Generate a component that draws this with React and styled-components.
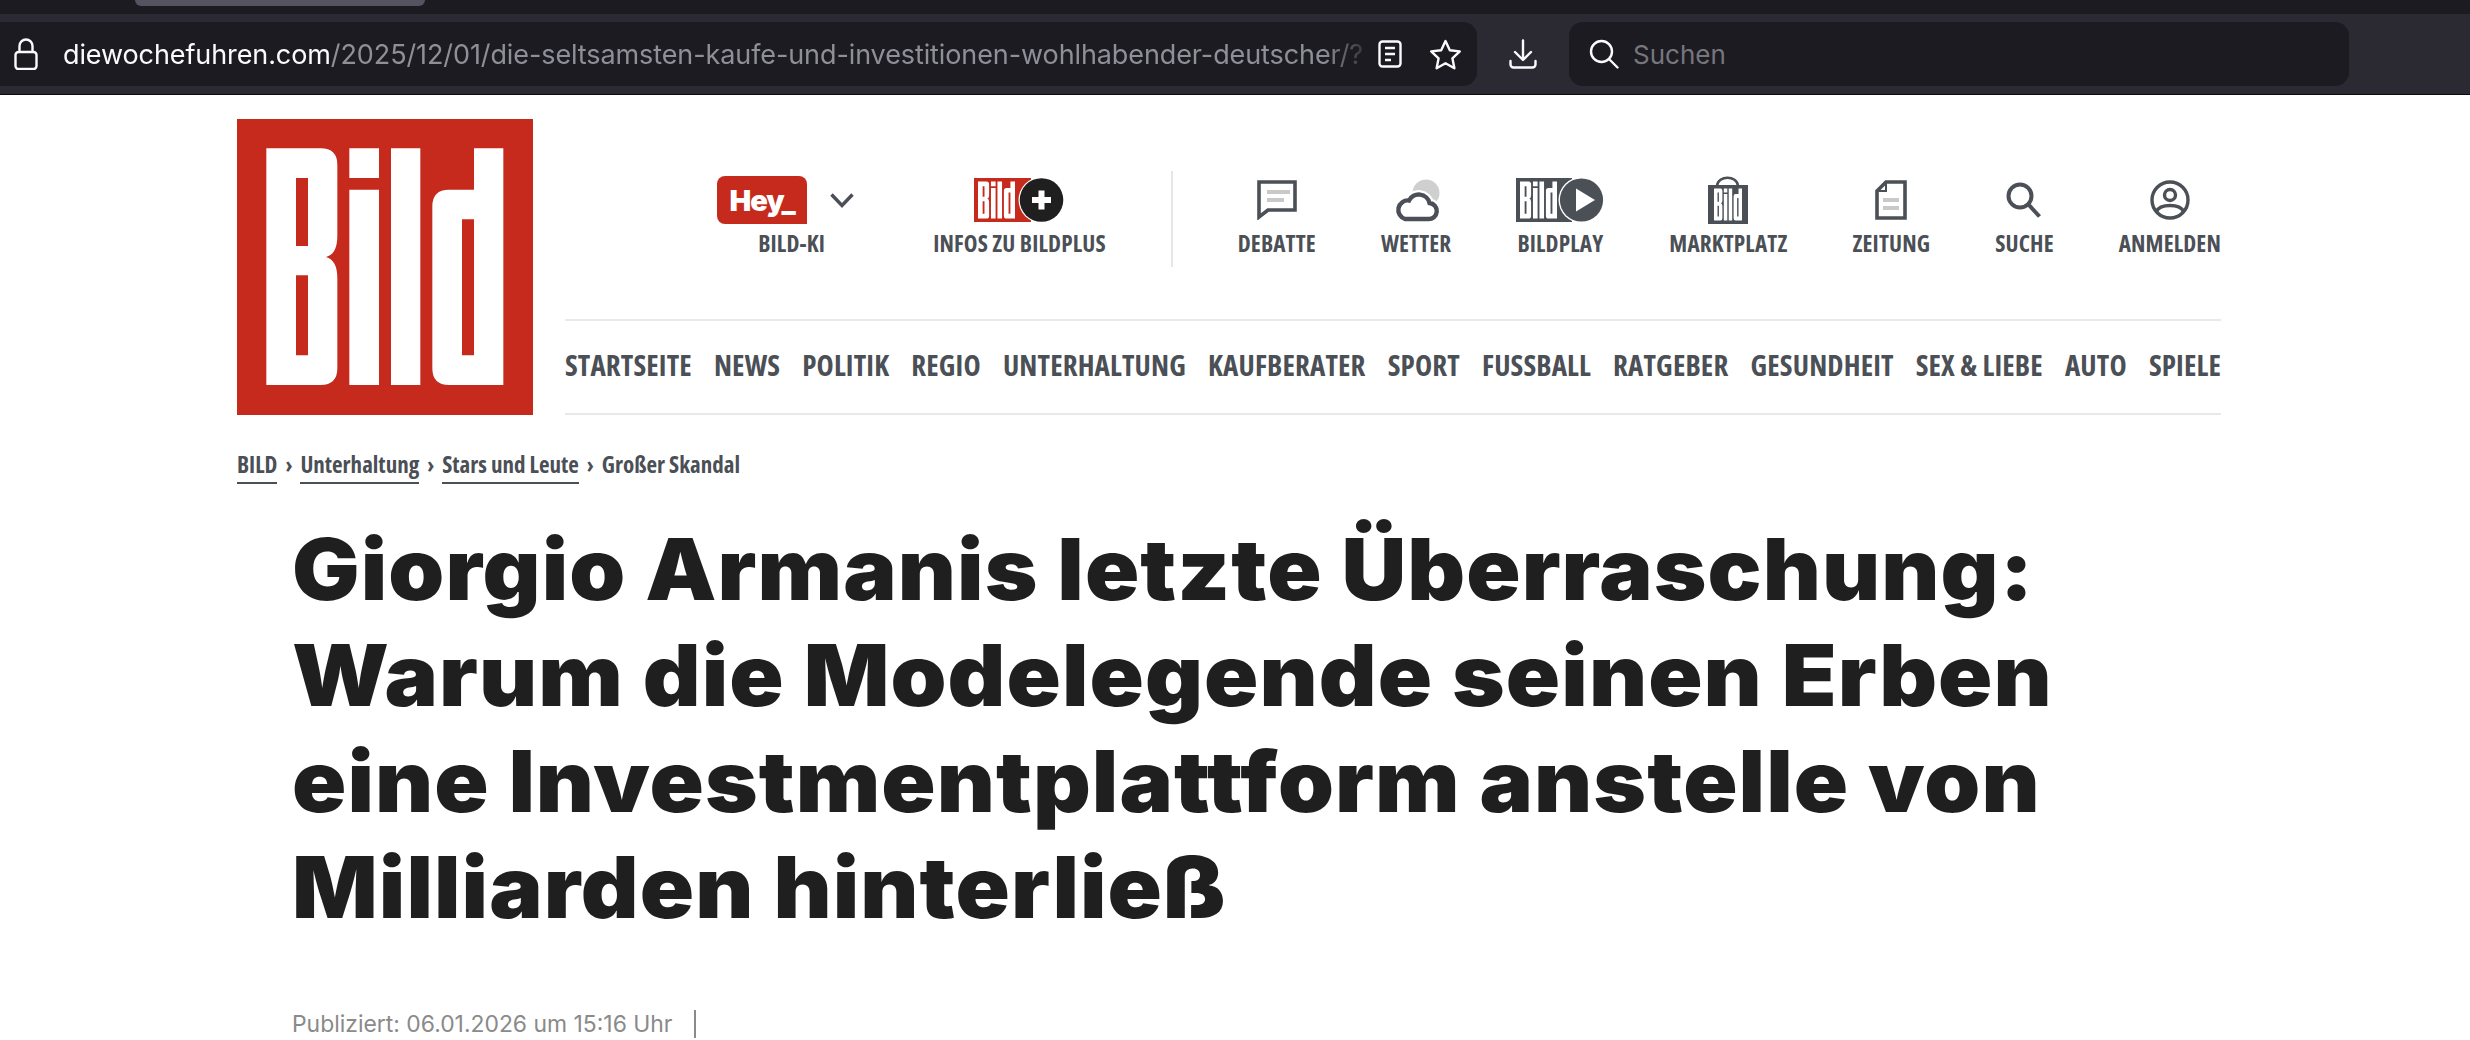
import React from 'react';
import styled, { createGlobalStyle } from 'styled-components';

const SLATE = '#4b4f56';
const RED = '#c62a1c';
const NARROW = `'Open Sans', sans-serif`;
const BILD_PATH =
  'M88 88H251Q301 88 301 138V350Q301 405 267 414Q301 423 301 478V748Q301 798 251 798H88ZM177 177V381H213V177ZM177 469V709H213V469Z' +
  'M337 88H426V177H337ZM337 212H426V798H337Z' +
  'M462 88H550V798H462Z' +
  'M711 88H799V798H636Q586 798 586 748V262Q586 212 636 212H711ZM675 301V709H711V301Z';

const GlobalStyle = createGlobalStyle`
  html, body {
    margin: 0;
    height: 1040px;
    overflow: hidden;
    background: #fff;
  }
`;

const Page = styled.div`
  width: 2470px;
  height: 1040px;
  overflow: hidden;
`;

/* browser chrome */
const TabStrip = styled.div`
  height: 14px;
  background: #1c1b22;
`;

const TabStub = styled.div`
  width: 290px;
  height: 6px;
  margin-left: 135px;
  background: #55535f;
  border-radius: 0 0 8px 8px;
`;

const Toolbar = styled.div`
  height: 64px;
  padding: 8px 0;
  display: flex;
  align-items: stretch;
  background: #2b2a33;
  border-bottom: 1px solid #0c0c0f;
`;

const UrlBar = styled.div`
  width: 1477px;
  flex: none;
  display: flex;
  align-items: center;
  padding: 0 14px;
  box-sizing: border-box;
  background: #1c1b22;
  border-radius: 0 14px 14px 0;
`;

const UrlText = styled.div`
  width: 1300px;
  margin: 0 15px 0 25px;
  flex: none;
  overflow: hidden;
  white-space: nowrap;
  font: 400 27px Inter, sans-serif;
  letter-spacing: -0.1px;
  color: #8f8f97;
  -webkit-mask-image: linear-gradient(to right, #000 97%, rgba(0, 0, 0, 0.25) 100%);
  mask-image: linear-gradient(to right, #000 97%, rgba(0, 0, 0, 0.25) 100%);

  b {
    font-weight: 400;
    color: #fbfbfe;
  }
`;

const ChromeIcons = styled.div`
  display: flex;
  align-items: center;
  gap: 27px;
`;

const DownloadSlot = styled.div`
  width: 92px;
  flex: none;
  display: flex;
  align-items: center;
  justify-content: center;
`;

const SearchBar = styled.div`
  width: 780px;
  flex: none;
  display: flex;
  align-items: center;
  gap: 14px;
  padding-left: 20px;
  box-sizing: border-box;
  background: #1c1b22;
  border-radius: 14px;
  font: 400 26px Inter, sans-serif;
  color: #77767d;
`;

/* site header */
const Site = styled.div`
  width: 1984px;
  margin-left: 237px;
`;

const Header = styled.header`
  display: flex;
  gap: 32px;
  padding-top: 24px;
`;

const LogoSvg = styled.svg`
  width: 296px;
  height: 296px;
  flex: none;
  display: block;
`;

const HeaderMain = styled.div`
  flex: 1;
  min-width: 0;
`;

const Utilities = styled.div`
  height: 143px;
  padding-top: 57px;
  display: flex;
  justify-content: flex-end;
  gap: 65px;
  border-bottom: 2px solid #e8e9ed;
`;

const UtilItem = styled.a`
  display: flex;
  flex-direction: column;
  align-items: center;
  margin-right: ${(p) => p.$trail || 0}px;
  font-family: ${NARROW};
  font-stretch: condensed;
  font-weight: 700;
  font-size: 23.2px;
  line-height: 28px;
  letter-spacing: 0.15px;
  color: ${SLATE};
  white-space: nowrap;
`;

const UtilIcon = styled.div`
  height: 48px;
  margin-bottom: 5px;
  display: flex;
  align-items: center;
`;

const Divider = styled.div`
  width: 2px;
  height: 96px;
  margin-top: -5px;
  background: #e6e6e6;
`;

const HeyWrap = styled.div`
  display: flex;
  align-items: center;
  gap: 23px;
`;

const HeyBadge = styled.span`
  width: 90px;
  height: 48px;
  display: flex;
  align-items: center;
  justify-content: center;
  background: ${RED};
  border-radius: 8px 8px 0 8px;
  font: 900 29px Inter, sans-serif;
  letter-spacing: -1px;
  color: #fff;
`;

const KiLabel = styled.span`
  margin-left: 12px;
`;

const Nav = styled.nav`
  height: 86px;
  padding-bottom: 6px;
  display: flex;
  align-items: center;
  justify-content: space-between;
  border-bottom: 2px solid #e8e9ed;
`;

const NavLink = styled.a`
  font-family: ${NARROW};
  font-stretch: condensed;
  font-weight: 700;
  font-size: 29px;
  letter-spacing: 0.15px;
  color: ${SLATE};
  white-space: nowrap;
`;

const Crumbs = styled.div`
  display: flex;
  align-items: center;
  gap: 8px;
  margin-top: 33px;
  font-family: ${NARROW};
  font-stretch: condensed;
  font-weight: 700;
  font-size: 23px;
  color: ${SLATE};
`;

const Crumb = styled.a`
  padding-bottom: 2px;
  border-bottom: ${(p) => (p.$plain ? '2px solid transparent' : `2px solid ${SLATE}`)};
  white-space: nowrap;
`;

const Chevron = styled.span`
  padding-bottom: 4px;
`;

const Article = styled.article`
  padding-left: 55px;
`;

const Headline = styled.h1`
  margin: 33px 0 0;
  font: 900 85px/106px Inter, sans-serif;
  letter-spacing: 1px;
  color: #1f1f1f;
  white-space: nowrap;
  transform: scaleX(1.055);
  transform-origin: left;
`;

const Meta = styled.div`
  display: flex;
  align-items: center;
  gap: 22px;
  margin-top: 69px;
  font: 400 22.9px Inter, sans-serif;
  color: #8a8a8a;
`;

const MetaBar = styled.span`
  width: 2px;
  height: 28px;
  background: #8a8a8a;
`;

const Mark = ({ x, y, size, tall = size, fill = '#fff' }) => (
  <path
    d={BILD_PATH}
    fill={fill}
    fillRule="evenodd"
    transform={`translate(${x} ${y}) scale(${size / 711} ${tall / 710}) translate(-88 -88)`}
  />
);

const Logo = () => (
  <LogoSvg viewBox="0 0 888 888" aria-label="Bild">
    <rect width="888" height="888" fill={RED} />
    <path d={BILD_PATH} fill="#fff" fillRule="evenodd" />
  </LogoSvg>
);

const LockIcon = () => (
  <svg width="24" height="32" viewBox="0 0 24 32" fill="none" stroke="#fbfbfe" strokeWidth="2.4">
    <path d="M5.5 14V8a6.5 6.5 0 0 1 13 0v6" />
    <rect x="1.5" y="14" width="21" height="17" rx="3" />
  </svg>
);

const ReaderIcon = () => (
  <svg width="24" height="28" viewBox="0 0 24 28" fill="none" stroke="#fbfbfe" strokeWidth="2.4">
    <rect x="1.5" y="1.5" width="21" height="25" rx="3" />
    <path d="M7 8h10M7 14h10M7 20h6" />
  </svg>
);

const StarIcon = () => (
  <svg width="33" height="31" viewBox="0 0 33 31" fill="none" stroke="#fbfbfe" strokeWidth="2.4" strokeLinejoin="round">
    <path d="M16.5 2l4.3 9.2 10 1.2-7.4 6.9 2 9.9-8.9-5-8.9 5 2-9.9-7.4-6.9 10-1.2z" />
  </svg>
);

const DownloadIcon = () => (
  <svg width="28" height="30" viewBox="0 0 28 30" fill="none" stroke="#fbfbfe" strokeWidth="2.4" strokeLinecap="round" strokeLinejoin="round">
    <path d="M14 1.5v19M6 13l8 8 8-8M1.5 22v3.5a3 3 0 0 0 3 3h19a3 3 0 0 0 3-3V22" />
  </svg>
);

const SearchGlass = () => (
  <svg width="30" height="30" viewBox="0 0 30 30" fill="none" stroke="#fbfbfe" strokeWidth="2.4" strokeLinecap="round">
    <circle cx="12.5" cy="12.5" r="10.5" />
    <path d="M20 20l8.5 8.5" />
  </svg>
);

const ChevronDown = () => (
  <svg width="24" height="15" viewBox="0 0 24 15" fill="none" stroke={SLATE} strokeWidth="3.4">
    <path d="M1.5 1.5L12 12.5 22.5 1.5" />
  </svg>
);

const BildPlus = () => (
  <svg width="90" height="44" viewBox="0 0 90 44">
    <rect width="57" height="44" fill={RED} />
    <Mark x={4} y={3.5} size={37} />
    <circle cx="67.5" cy="22" r="23" fill="#fff" />
    <circle cx="67.5" cy="22" r="21.8" fill="#1f1f1f" />
    <path d="M67.5 12.5v19M58 22h19" stroke="#fff" strokeWidth="6" />
  </svg>
);

const Debatte = () => (
  <svg width="40" height="40" viewBox="0 0 40 40" fill="none">
    <path d="M2 2H38V30H11L2 37Z" stroke={SLATE} strokeWidth="3.6" />
    <path d="M10 10H33V14H10ZM10 18H27V22H10Z" fill="#c9c9c9" />
  </svg>
);

const Wetter = () => (
  <svg width="50" height="44" viewBox="0 0 50 44">
    <circle cx="35" cy="15" r="13.5" fill="#cfcfcf" />
    <path
      d="M14 41H37A8 8 0 0 0 38.5 25A11 11 0 0 0 18 22.5A9.5 9.5 0 0 0 14 41Z"
      fill="#fff"
      stroke="#fff"
      strokeWidth="9"
    />
    <path
      d="M14 41H37A8 8 0 0 0 38.5 25A11 11 0 0 0 18 22.5A9.5 9.5 0 0 0 14 41Z"
      fill="#fff"
      stroke={SLATE}
      strokeWidth="4.4"
    />
  </svg>
);

const BildPlay = () => (
  <svg width="88" height="44" viewBox="0 0 88 44">
    <rect width="56" height="44" fill={SLATE} />
    <Mark x={4} y={3.5} size={37} />
    <circle cx="65.5" cy="22" r="23" fill="#fff" />
    <circle cx="65.5" cy="22" r="21.6" fill={SLATE} />
    <path d="M60 10.5L79 22 60 33.5Z" fill="#fff" />
  </svg>
);

const Marktplatz = () => (
  <svg width="40" height="48" viewBox="0 0 40 48">
    <path d="M9 10C10 -1 29 -1 30 10" fill="none" stroke={SLATE} strokeWidth="2.6" />
    <rect y="9" width="40" height="39" fill={SLATE} />
    <Mark x={6} y={12.5} size={28} tall={32} />
  </svg>
);

const Zeitung = () => (
  <svg width="32" height="40" viewBox="0 0 32 40" fill="none">
    <path d="M11 2H30V38H2V11Z" stroke={SLATE} strokeWidth="3.6" />
    <path d="M11 2V11H2" stroke={SLATE} strokeWidth="2" />
    <path d="M8 18H24V22H8ZM8 26H24V30H8Z" fill="#c9c9c9" />
  </svg>
);

const Suche = () => (
  <svg width="36" height="36" viewBox="0 0 36 36" fill="none" stroke={SLATE} strokeWidth="4">
    <circle cx="14" cy="14" r="11.5" />
    <path d="M22 22L33.5 34.5" />
  </svg>
);

const Anmelden = () => (
  <svg width="40" height="40" viewBox="0 0 40 40" fill="none" stroke={SLATE} strokeWidth="3.4">
    <circle cx="20" cy="20" r="18" />
    <circle cx="20" cy="15" r="5.5" />
    <path d="M6.5 31.5C10 23.5 30 23.5 33.5 31.5" />
  </svg>
);

const utilities = [
  { label: 'DEBATTE', icon: <Debatte /> },
  { label: 'WETTER', icon: <Wetter /> },
  { label: 'BILDPLAY', icon: <BildPlay /> },
  { label: 'MARKTPLATZ', icon: <Marktplatz /> },
  { label: 'ZEITUNG', icon: <Zeitung /> },
  { label: 'SUCHE', icon: <Suche /> },
  { label: 'ANMELDEN', icon: <Anmelden /> },
];

const navItems = [
  'STARTSEITE', 'NEWS', 'POLITIK', 'REGIO', 'UNTERHALTUNG', 'KAUFBERATER', 'SPORT',
  'FUSSBALL', 'RATGEBER', 'GESUNDHEIT', 'SEX & LIEBE', 'AUTO', 'SPIELE',
];

export default function App() {
  return (
    <Page>
      <GlobalStyle />
      <TabStrip>
        <TabStub />
      </TabStrip>
      <Toolbar>
        <UrlBar>
          <LockIcon />
          <UrlText>
            <b>diewochefuhren.com</b>/2025/12/01/die-seltsamsten-kaufe-und-investitionen-wohlhabender-deutscher/?
          </UrlText>
          <ChromeIcons>
            <ReaderIcon />
            <StarIcon />
          </ChromeIcons>
        </UrlBar>
        <DownloadSlot>
          <DownloadIcon />
        </DownloadSlot>
        <SearchBar>
          <SearchGlass />
          Suchen
        </SearchBar>
      </Toolbar>

      <Site>
        <Header>
          <Logo />
          <HeaderMain>
            <Utilities>
              <UtilItem $trail={14}>
                <UtilIcon>
                  <HeyWrap>
                    <HeyBadge>Hey_</HeyBadge>
                    <ChevronDown />
                  </HeyWrap>
                </UtilIcon>
                <KiLabel>BILD-KI</KiLabel>
              </UtilItem>
              <UtilItem>
                <UtilIcon>
                  <BildPlus />
                </UtilIcon>
                INFOS ZU BILDPLUS
              </UtilItem>
              <Divider />
              {utilities.map((item) => (
                <UtilItem key={item.label}>
                  <UtilIcon>{item.icon}</UtilIcon>
                  {item.label}
                </UtilItem>
              ))}
            </Utilities>
            <Nav>
              {navItems.map((item) => (
                <NavLink key={item}>{item}</NavLink>
              ))}
            </Nav>
          </HeaderMain>
        </Header>

        <Crumbs>
          <Crumb>BILD</Crumb>
          <Chevron>›</Chevron>
          <Crumb>Unterhaltung</Crumb>
          <Chevron>›</Chevron>
          <Crumb>Stars und Leute</Crumb>
          <Chevron>›</Chevron>
          <Crumb $plain>Großer Skandal</Crumb>
        </Crumbs>

        <Article>
          <Headline>
            Giorgio Armanis letzte Überraschung:
            <br />
            Warum die Modelegende seinen Erben
            <br />
            eine Investmentplattform anstelle von
            <br />
            Milliarden hinterließ
          </Headline>
          <Meta>
            Publiziert: 06.01.2026 um 15:16 Uhr
            <MetaBar />
          </Meta>
        </Article>
      </Site>
    </Page>
  );
}
